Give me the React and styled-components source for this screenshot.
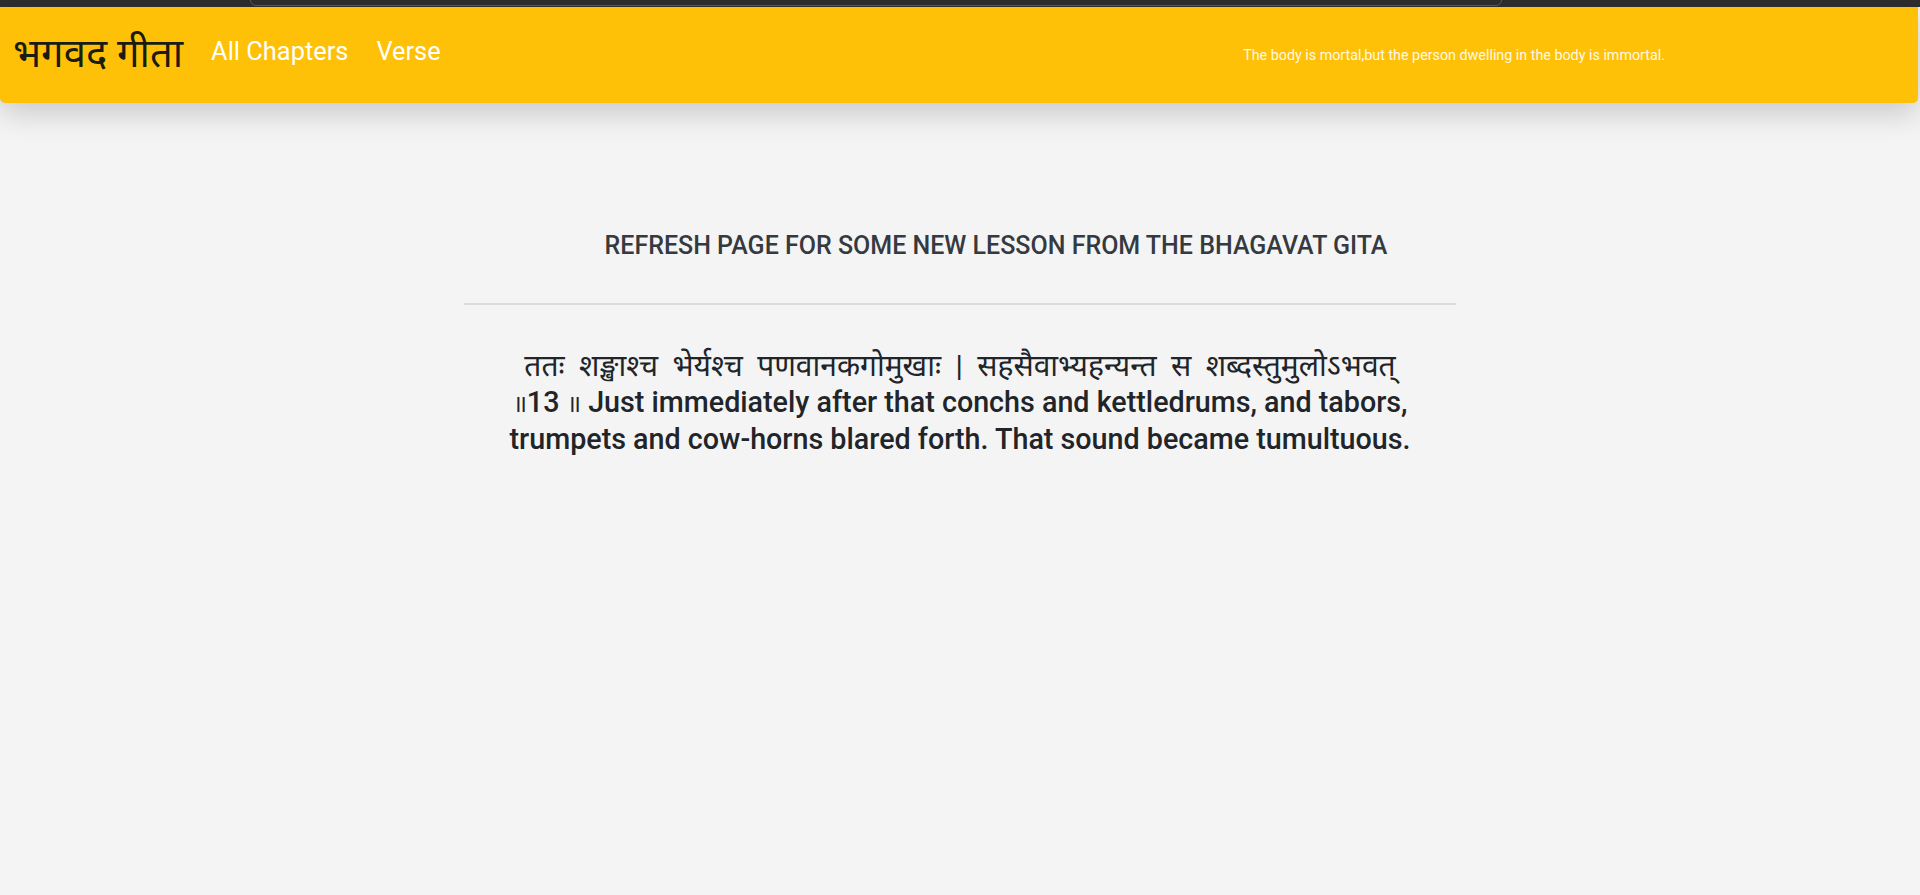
import React from 'react';
import styled, { createGlobalStyle } from 'styled-components';

const GlobalStyle = createGlobalStyle`
  html, body {
    margin: 0;
    padding: 0;
    background: #f4f4f4;
    font-family: Roboto, "Noto Sans", "DejaVu Sans", sans-serif;
  }
`;

const Chrome = styled.div`
  height: 7px;
  background: #2e2e2e;
  display: flex;
  align-items: flex-start;
  padding-left: 250px;
  overflow: hidden;

  span {
    display: block;
    width: 1250px;
    height: 10px;
    margin-top: -6px;
    border: 1px solid #5a5a5a;
    border-radius: 6px;
  }
`;

const Header = styled.header`
  height: 96px;
  margin-right: 2px;
  padding: 0 13px 8px;
  box-sizing: border-box;
  display: flex;
  align-items: center;
  background: #ffc107;
  border-radius: 0 0 5px 5px;
  box-shadow: 0 10px 30px rgba(0, 0, 0, 0.18);
  position: relative;
`;

const Brand = styled.a`
  font-size: 40px;
  color: #1a1c10;
  text-decoration: none;
  margin-right: 14px;
`;

const NavList = styled.ul`
  display: flex;
  list-style: none;
  margin: 0;
  padding: 0;

  li a {
    display: block;
    padding: 0 14px;
    font-size: 25.4px;
    color: #fff;
    text-decoration: none;
  }
`;

const Quote = styled.p`
  margin: 8px 240px 0 auto;
  font-size: 14.3px;
  color: #fff9e6;
`;

const Main = styled.main`
  width: 992px;
  margin: 0 auto;
  padding-top: 128px;
`;

const Title = styled.h2`
  margin: 0;
  padding-left: 72px;
  text-align: center;
  font-size: 25px;
  font-weight: 500;
  color: #343a40;
  line-height: 30px;
`;

const Rule = styled.hr`
  margin: 42px 0 0;
  border: 0;
  border-top: 2px solid #dcdcdc;
`;

const Verse = styled.h1`
  margin: 43px 0 0;
  text-align: center;
  font-size: 28.7px;
  font-weight: 500;
  line-height: 35.5px;
  color: #212529;
`;

const Sanskrit = styled.span`
  font-size: ${(p) => (p.$small ? '24px' : '30px')};
  font-weight: 400;
  word-spacing: ${(p) => (p.$small ? '0' : '7px')};
`;

export default function App() {
  return (
    <>
      <GlobalStyle />
      <Chrome>
        <span />
      </Chrome>
      <Header>
        <Brand href='#'>भगवद गीता</Brand>
        <NavList>
          <li>
            <a href='#'>All Chapters</a>
          </li>
          <li>
            <a href='#'>Verse</a>
          </li>
        </NavList>
        <Quote>The body is mortal,but the person dwelling in the body is immortal.</Quote>
      </Header>
      <Main>
        <Title>REFRESH PAGE FOR SOME NEW LESSON FROM THE BHAGAVAT GITA</Title>
        <Rule />
        <Verse>
          <Sanskrit>ततः शङ्खाश्च भेर्यश्च पणवानकगोमुखाः | सहसैवाभ्यहन्यन्त स शब्दस्तुमुलोऽभवत्</Sanskrit>
          <br />
          <Sanskrit $small>॥</Sanskrit>13 <Sanskrit $small>॥</Sanskrit> Just immediately after that conchs and kettledrums, and tabors,
          <br />
          trumpets and cow-horns blared forth. That sound became tumultuous.
        </Verse>
      </Main>
    </>
  );
}
